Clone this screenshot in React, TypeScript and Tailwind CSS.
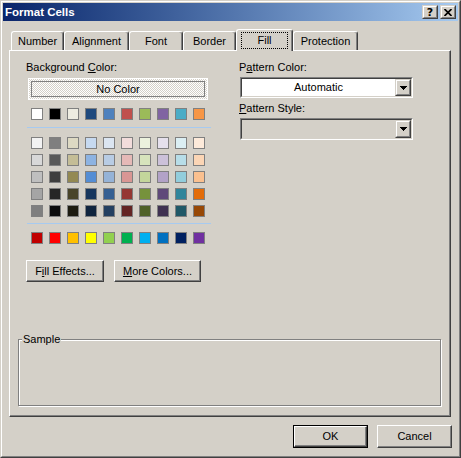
import React from "react";

const firstRow = [
  "bg-[#FFFFFF]", "bg-[#000000]", "bg-[#EEECE1]", "bg-[#1F497D]", "bg-[#4F81BD]",
  "bg-[#C0504D]", "bg-[#9BBB59]", "bg-[#8064A2]", "bg-[#4BACC6]", "bg-[#F79646]",
];

const tintRows = [
  ["bg-[#F2F2F2]", "bg-[#7F7F7F]", "bg-[#DDD9C3]", "bg-[#C6D9F0]", "bg-[#DBE5F1]", "bg-[#F2DCDB]", "bg-[#EBF1DD]", "bg-[#E5E0EC]", "bg-[#DBEEF3]", "bg-[#FDEADA]"],
  ["bg-[#D8D8D8]", "bg-[#595959]", "bg-[#C4BD97]", "bg-[#8DB3E2]", "bg-[#B8CCE4]", "bg-[#E5B9B7]", "bg-[#D7E3BC]", "bg-[#CCC1D9]", "bg-[#B7DDE8]", "bg-[#FBD5B5]"],
  ["bg-[#BFBFBF]", "bg-[#3F3F3F]", "bg-[#938953]", "bg-[#548DD4]", "bg-[#95B3D7]", "bg-[#D99694]", "bg-[#C3D69B]", "bg-[#B2A2C7]", "bg-[#92CDDC]", "bg-[#FAC08F]"],
  ["bg-[#A5A5A5]", "bg-[#262626]", "bg-[#494429]", "bg-[#17365D]", "bg-[#366092]", "bg-[#953734]", "bg-[#76923C]", "bg-[#5F497A]", "bg-[#31859B]", "bg-[#E36C09]"],
  ["bg-[#7F7F7F]", "bg-[#0C0C0C]", "bg-[#1D1B10]", "bg-[#0F243E]", "bg-[#244061]", "bg-[#632423]", "bg-[#4F6128]", "bg-[#3F3151]", "bg-[#205867]", "bg-[#974806]"],
];

const standardRow = [
  "bg-[#C00000]", "bg-[#FF0000]", "bg-[#FFC000]", "bg-[#FFFF00]", "bg-[#92D050]",
  "bg-[#00B050]", "bg-[#00B0F0]", "bg-[#0070C0]", "bg-[#002060]", "bg-[#7030A0]",
];

function Swatch({ cls }: { cls: string }) {
  return <div className={`w-[12px] h-[12px] border border-[#808080] ${cls}`} />;
}

function SwatchGrid({ rows }: { rows: string[][] }) {
  return (
    <div className="grid grid-cols-[repeat(10,12px)] gap-x-[6px] gap-y-[5px]">
      {rows.flat().map((c, i) => (
        <Swatch key={i} cls={c} />
      ))}
    </div>
  );
}

function Button({
  children,
  className = "",
  isDefault = false,
}: {
  children: React.ReactNode;
  className?: string;
  isDefault?: boolean;
}) {
  const inner = (
    <div className="w-full h-full border border-t-white border-l-white border-r-[#404040] border-b-[#404040] shadow-[inset_-1px_-1px_0_#808080] flex items-center justify-center">
      {children}
    </div>
  );
  if (isDefault) {
    return <div className={`border border-black ${className}`}>{inner}</div>;
  }
  return <div className={className}>{inner}</div>;
}

function Arrow() {
  return (
    <div className="w-[16px] h-full border border-t-[#d4d0c8] border-l-[#d4d0c8] border-r-[#404040] border-b-[#404040] bg-[#d4d0c8]">
      <div className="w-full h-full border border-t-white border-l-white border-r-[#808080] border-b-[#808080] flex items-center justify-center">
        <svg width="7" height="4" viewBox="0 0 7 4" shapeRendering="crispEdges">
          <polygon points="0,0 7,0 3.5,4" fill="#000" />
        </svg>
      </div>
    </div>
  );
}

function Combo({
  children,
  className = "",
  bg,
}: {
  children?: React.ReactNode;
  className?: string;
  bg: string;
}) {
  return (
    <div className={`border border-t-[#808080] border-l-[#808080] border-r-white border-b-white ${className}`}>
      <div className={`w-full h-full border border-t-[#404040] border-l-[#404040] border-r-[#d4d0c8] border-b-[#d4d0c8] flex ${bg}`}>
        <div className="flex-1 flex items-center justify-center">{children}</div>
        <Arrow />
      </div>
    </div>
  );
}

function TitleBtn({ children }: { children: React.ReactNode }) {
  return (
    <div className="w-[16px] h-[14px] border border-t-[#d4d0c8] border-l-[#d4d0c8] border-r-[#404040] border-b-[#404040] bg-[#d4d0c8]">
      <div className="w-full h-full border border-t-white border-l-white border-r-[#808080] border-b-[#808080] flex items-center justify-center">
        {children}
      </div>
    </div>
  );
}

const tabs = [
  { label: "Number", w: "w-[53px]" },
  { label: "Alignment", w: "w-[65px]" },
  { label: "Font", w: "w-[54px]" },
  { label: "Border", w: "w-[53px]" },
  { label: "Fill", w: "w-[57px]", selected: true },
  { label: "Protection", w: "w-[65px]" },
];

export default function App() {
  return (
    <div className="w-[461px] h-[458px] bg-[#d4d0c8] font-['Liberation_Sans',Arial,sans-serif] text-[11px] leading-[13px] text-black border border-t-[#d4d0c8] border-l-[#d4d0c8] border-r-[#404040] border-b-[#404040]">
      <div className="h-full border border-t-white border-l-white border-r-[#808080] border-b-[#808080] p-px flex flex-col">
        {/* Title bar */}
        <div className="h-[18px] flex items-center bg-linear-to-r from-[#0a246a] to-[#a6caf0] pl-[2px] pr-[2px]">
          <span className="flex-1 text-white font-bold text-[11.5px] leading-[14px]">Format Cells</span>
          <div className="flex gap-[2px]">
            <TitleBtn>
              <span className="font-bold text-[11px] leading-[11px] font-['DejaVu_Sans',sans-serif]">?</span>
            </TitleBtn>
            <TitleBtn>
              <svg width="8" height="7" viewBox="0 0 8 7">
                <path d="M0.5 0 L7.5 7 M7.5 0 L0.5 7" stroke="#000" strokeWidth="1.7" />
              </svg>
            </TitleBtn>
          </div>
        </div>

        {/* Body */}
        <div className="flex flex-col pl-[6px] pt-[8px]">
          {/* Tabs */}
          <div className="flex items-end h-[22px] -mb-px relative z-10 pl-[2px]">
            {tabs.map((t) =>
              t.selected ? (
                <div
                  key={t.label}
                  className={`${t.w} h-[22px] bg-[#d4d0c8] rounded-t-[3px] border-l border-t border-r border-l-white border-t-white border-r-[#404040] shadow-[inset_-1px_0_0_#808080] flex flex-col items-center`}
                >
                  <span className="mt-[2px] w-[47px] h-[17px] border border-dotted border-black flex items-center justify-center">
                    {t.label}
                  </span>
                </div>
              ) : (
                <div
                  key={t.label}
                  className={`${t.w} h-[19px] mb-px rounded-t-[3px] border-l border-t border-r border-l-white border-t-white border-r-[#404040] shadow-[inset_-1px_0_0_#808080] flex items-center justify-center`}
                >
                  {t.label}
                </div>
              )
            )}
          </div>

          {/* Panel */}
          <div className="w-[442px] h-[367px] border border-t-white border-l-white border-r-[#404040] border-b-[#404040] shadow-[inset_-1px_-1px_0_#808080] flex flex-col">
            <div className="flex mt-[10px]">
              {/* Left column */}
              <div className="ml-[16px] w-[185px] flex flex-col">
                <div>
                  Background <u>C</u>olor:
                </div>
                <div className="mt-[4px] ml-[2px] w-[180px] h-[22px] border border-white bg-[image:conic-gradient(#ffffff_25%,#d4d0c8_0_50%,#ffffff_0_75%,#d4d0c8_0)] bg-[length:2px_2px] p-[2px]">
                  <div className="w-full h-full border border-[#808080] flex items-center justify-center">
                    No Color
                  </div>
                </div>
                <div className="mt-[8px] ml-[5px]">
                  <SwatchGrid rows={[firstRow]} />
                </div>
                <div className="mt-[7px] ml-px w-[184px] h-px bg-[#a6caf0]" />
                <div className="mt-[9px] ml-[5px]">
                  <SwatchGrid rows={tintRows} />
                </div>
                <div className="mt-[6px] ml-px w-[184px] h-px bg-[#a6caf0]" />
                <div className="mt-[8px] ml-[5px]">
                  <SwatchGrid rows={[standardRow]} />
                </div>
                <div className="mt-[16px] flex gap-[10px]">
                  <Button className="w-[78px] h-[22px]">
                    F<u>i</u>ll Effects...
                  </Button>
                  <Button className="w-[87px] h-[22px]">
                    <span>
                      <u>M</u>ore Colors...
                    </span>
                  </Button>
                </div>
              </div>

              {/* Right column */}
              <div className="ml-[28px] w-[174px] flex flex-col">
                <div>
                  P<u>a</u>ttern Color:
                </div>
                <Combo className="mt-[3px] ml-px w-[173px] h-[21px]" bg="bg-white">
                  Automatic
                </Combo>
                <div className="mt-[4px]">
                  <u>P</u>attern Style:
                </div>
                <Combo className="mt-[3px] ml-px w-[173px] h-[22px]" bg="bg-[#d4d0c8]" />
              </div>
            </div>

            {/* Sample */}
            <div className="mt-[57px] ml-[8px] w-[423px] h-[67px] relative border border-[#808080] shadow-[inset_1px_1px_0_#fff,1px_1px_0_#fff]">
              <span className="absolute left-[3px] top-[-7px] px-px bg-[#d4d0c8]">Sample</span>
            </div>
          </div>

          {/* Dialog buttons */}
          <div className="mt-[8px] flex justify-end gap-[9px] pr-[6px]">
            <Button isDefault className="w-[75px] h-[23px]">
              OK
            </Button>
            <Button className="w-[75px] h-[23px]">Cancel</Button>
          </div>
        </div>
      </div>
    </div>
  );
}
